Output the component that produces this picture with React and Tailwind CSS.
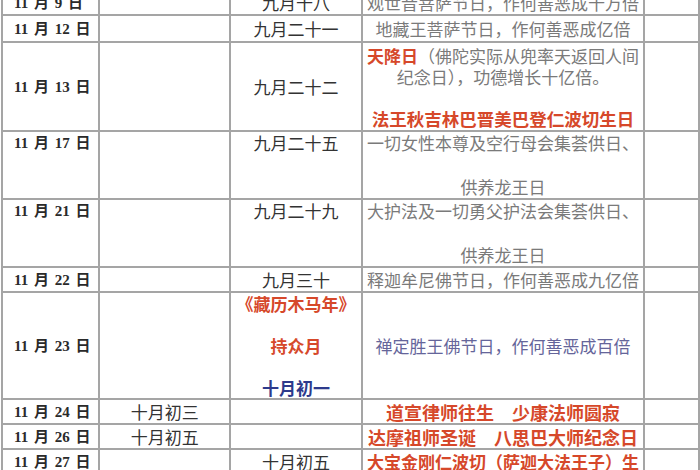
const CJK = { fontFamily: '"Noto Sans CJK SC", "Noto Sans", sans-serif' };
const DATE = { fontFamily: '"Liberation Serif", "Noto Sans CJK SC", serif' };

const cell = "border-2 border-[#a5a5a5] p-0";
const red = "font-bold text-[#d6482a]";

function DateCell({ children, top }) {
  return (
    <td
      style={DATE}
      className={`${cell} pl-[11px] text-[15px] font-bold leading-[20px] [word-spacing:2px] text-[#2a2a2a] ${top ? "align-top pt-[1px]" : "align-middle"}`}
    >
      {children}
    </td>
  );
}

function Lunar({ children, top }) {
  return (
    <td className={`${cell} text-center text-[17px] leading-[20px] text-[#333] ${top ? "align-top pt-[1px]" : "align-middle"}`}>
      {children}
    </td>
  );
}

function Desc({ children, className = "" }) {
  return (
    <td className={`${cell} overflow-hidden whitespace-nowrap text-center align-middle text-[17px] text-[#7a7a7a] ${className}`}>
      {children}
    </td>
  );
}

function Empty() {
  return <td className={cell}></td>;
}

export default function App() {
  return (
    <div style={CJK} className="h-[470px] w-[700px] overflow-hidden bg-white">
      <table className="-mt-[10px] ml-[1px] table-fixed border-collapse">
        <colgroup>
          <col className="w-[104px]" />
          <col className="w-[142px]" />
          <col className="w-[141px]" />
          <col className="w-[283px]" />
          <col className="w-[60px]" />
        </colgroup>
        <tbody>
          <tr className="h-[24px]">
            <DateCell>11 月 9 日</DateCell>
            <Empty />
            <Lunar>九月十八</Lunar>
            <Desc className="leading-[20px]">观世音菩萨节日，作何善恶成十万倍</Desc>
            <Empty />
          </tr>
          <tr className="h-[27px]">
            <DateCell>11 月 12 日</DateCell>
            <Empty />
            <Lunar>九月二十一</Lunar>
            <Desc className="leading-[20px]">地藏王菩萨节日，作何善恶成亿倍</Desc>
            <Empty />
          </tr>
          <tr className="h-[89px]">
            <DateCell>11 月 13 日</DateCell>
            <Empty />
            <Lunar>九月二十二</Lunar>
            <Desc className="leading-[21px]">
              <div>
                <span className={red}>天降日</span>（佛陀实际从兜率天返回人间
              </div>
              <div>纪念日），功德增长十亿倍。</div>
              <div>&nbsp;</div>
              <div className={`${red} text-[17.5px]`}>法王秋吉林巴晋美巴登仁波切生日</div>
            </Desc>
            <Empty />
          </tr>
          <tr className="h-[67px]">
            <DateCell top>11 月 17 日</DateCell>
            <Empty />
            <Lunar top>九月二十五</Lunar>
            <Desc className="leading-[22px]">
              <div>一切女性本尊及空行母会集荟供日、</div>
              <div>&nbsp;</div>
              <div>供养龙王日</div>
            </Desc>
            <Empty />
          </tr>
          <tr className="h-[67px]">
            <DateCell top>11 月 21 日</DateCell>
            <Empty />
            <Lunar top>九月二十九</Lunar>
            <Desc className="leading-[22px]">
              <div>大护法及一切勇父护法会集荟供日、</div>
              <div>&nbsp;</div>
              <div>供养龙王日</div>
            </Desc>
            <Empty />
          </tr>
          <tr className="h-[25px]">
            <DateCell>11 月 22 日</DateCell>
            <Empty />
            <Lunar>九月三十</Lunar>
            <Desc className="leading-[20px]">释迦牟尼佛节日，作何善恶成九亿倍</Desc>
            <Empty />
          </tr>
          <tr className="h-[106px]">
            <DateCell>11 月 23 日</DateCell>
            <Empty />
            <td className={`${cell} text-center align-middle text-[17px] leading-[21px]`}>
              <div className={red}>《藏历木马年》</div>
              <div>&nbsp;</div>
              <div className={red}>持众月</div>
              <div>&nbsp;</div>
              <div className="font-bold text-[#2d3a8c]">十月初一</div>
            </td>
            <Desc className="leading-[20px] text-[#65659a]">禅定胜王佛节日，作何善恶成百倍</Desc>
            <Empty />
          </tr>
          <tr className="h-[25px]">
            <DateCell>11 月 24 日</DateCell>
            <td className={`${cell} text-center align-middle text-[17px] leading-[20px] text-[#333]`}>十月初三</td>
            <Empty />
            <Desc className={`${red} leading-[20px] text-[18px]`}>道宣律师往生　少康法师圆寂</Desc>
            <Empty />
          </tr>
          <tr className="h-[25px]">
            <DateCell>11 月 26 日</DateCell>
            <td className={`${cell} text-center align-middle text-[17px] leading-[20px] text-[#333]`}>十月初五</td>
            <Empty />
            <Desc className={`${red} leading-[20px] text-[18px]`}>达摩祖师圣诞　八思巴大师纪念日</Desc>
            <Empty />
          </tr>
          <tr className="h-[25px]">
            <DateCell>11 月 27 日</DateCell>
            <Empty />
            <Lunar>十月初五</Lunar>
            <Desc className={`${red} leading-[20px]`}>大宝金刚仁波切（萨迦大法王子）生</Desc>
            <Empty />
          </tr>
        </tbody>
      </table>
    </div>
  );
}
